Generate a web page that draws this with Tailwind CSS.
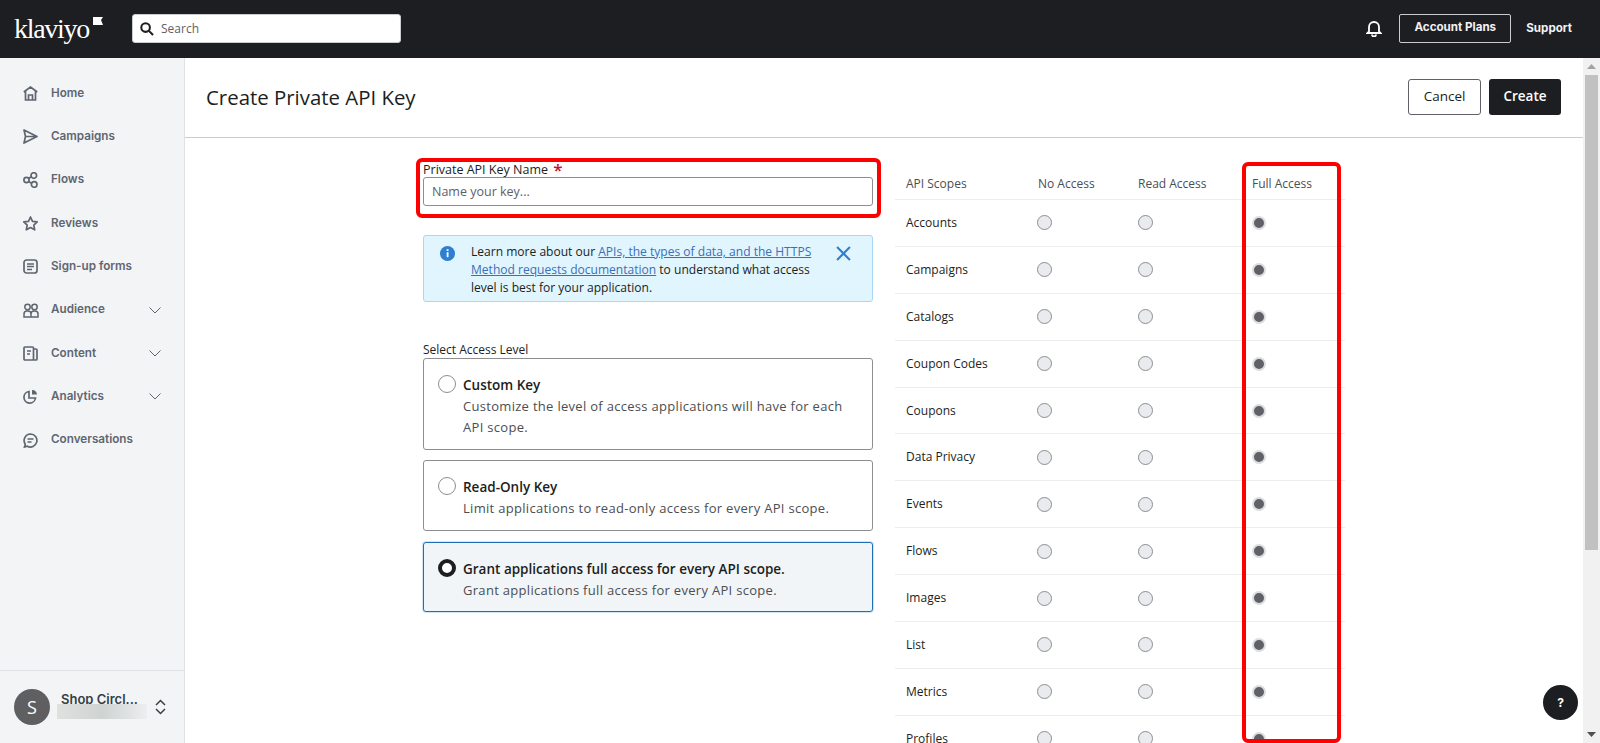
<!DOCTYPE html>
<html lang="en">
<head>
<meta charset="UTF-8">
<meta name="viewport" content="width=device-width, initial-scale=1.0">
<title>Create Private API Key</title>
<script src="https://cdn.jsdelivr.net/npm/@tailwindcss/browser@4"></script>
</head>
<body class="h-[743px] overflow-hidden bg-white font-['Open_Sans',sans-serif] text-[#1c1e21]">

<!-- Top bar -->
<header class="h-[58px] bg-[#1c1e21] flex items-center pl-[14px] pr-[28px]">
  <div class="w-[118px] flex items-start relative">
    <span class="font-['Liberation_Serif',serif] text-[28px] leading-none text-white tracking-[-1.3px]">klaviyo</span>
    <svg class="absolute left-[79px] top-[2px]" width="10" height="8" viewBox="0 0 10 8"><path d="M0 0h10L8 3l2 5H0z" fill="#fff"/></svg>
  </div>
  <div class="w-[269px] h-[29px] mb-[1px] bg-white rounded-[3px] border border-[#c9ccd1] flex items-center pl-[7px] gap-[7px]">
    <svg width="14" height="14" viewBox="0 0 15 15" fill="none" stroke="#1c1e21" stroke-width="2.2"><circle cx="6" cy="6" r="4.6"/><path d="M9.5 9.5l4.5 4.5"/></svg>
    <span class="text-[12px] text-[#5f6166]">Search</span>
  </div>
  <div class="ml-auto flex items-center">
    <svg width="16" height="17" viewBox="0 0 16 17" fill="none" stroke="#fff" stroke-width="1.8" class="mr-[17px] mb-[2px]"><path d="M3 11.5V7a5 5 0 0 1 10 0v4.5l1.5 1.5h-13z"/><path d="M6 14.5a2 2 0 0 0 4 0"/></svg>
    <div class="w-[112px] h-[29px] mb-[1px] border border-[#c9ccd1] rounded-[2px] flex items-center justify-center pb-[2px] font-['Inter',sans-serif] text-[11.6px] font-bold text-[#f1f2f4]">Account Plans</div>
    <span class="ml-[15px] font-['Inter',sans-serif] text-[11.6px] font-bold text-[#f1f2f4]">Support</span>
  </div>
</header>

<div class="flex h-[685px]">
  <!-- Sidebar -->
  <aside class="w-[185px] shrink-0 bg-[#f2f4f6] border-r border-[#dfe1e5] flex flex-col font-['Inter',sans-serif] text-[11.7px] font-semibold text-[#5f6670]">
    <nav class="pt-[14px] flex flex-col">
      <a class="h-[43.3px] flex items-center pl-[23px] gap-[13px]">
        <svg width="15" height="15" viewBox="0 0 15 15" fill="none" stroke="#5f6670" stroke-width="1.7"><path d="M.8 6l6.7-5L14.2 6M2.5 5v9h10V5M5.5 14V9h4v5"/></svg>
        <span>Home</span>
      </a>
      <a class="h-[43.3px] flex items-center pl-[23px] gap-[13px]">
        <svg width="15" height="15" viewBox="0 0 15 15" fill="none" stroke="#5f6670" stroke-width="1.7" stroke-linejoin="round"><path d="M1 1l13 6.5L1 14l1.5-6.5zM2.5 7.5H14"/></svg>
        <span>Campaigns</span>
      </a>
      <a class="h-[43.3px] flex items-center pl-[23px] gap-[13px]">
        <svg width="15" height="16" viewBox="0 0 15 16" fill="none" stroke="#5f6670" stroke-width="1.7"><circle cx="3.5" cy="8" r="2.6"/><circle cx="10.8" cy="3.5" r="2.8"/><circle cx="11.2" cy="12.5" r="2.8"/><path d="M5.5 6.5l2.8-1.7M5.5 9.5l3.2 1.7"/></svg>
        <span>Flows</span>
      </a>
      <a class="h-[43.3px] flex items-center pl-[23px] gap-[13px]">
        <svg width="15" height="15" viewBox="0 0 15 15" fill="none" stroke="#5f6670" stroke-width="1.7" stroke-linejoin="round"><path d="M7.5 1l2 4.3 4.7.6-3.400 3.200.9 4.700-4.200-2.300-4.200 2.300.9-4.700L.8 5.900l4.700-.6z"/></svg>
        <span>Reviews</span>
      </a>
      <a class="h-[43.3px] flex items-center pl-[23px] gap-[13px]">
        <svg width="15" height="15" viewBox="0 0 15 15" fill="none" stroke="#5f6670" stroke-width="1.7"><rect x="1" y="1" width="13" height="13" rx="2.5"/><path d="M4 5h7M4 7.5h7M4 10.5h5"/></svg>
        <span>Sign-up forms</span>
      </a>
      <a class="h-[43.3px] flex items-center pl-[23px] gap-[12px]">
        <svg width="16" height="15" viewBox="0 0 16 15" fill="none" stroke="#5f6670" stroke-width="1.5"><circle cx="4.5" cy="4" r="2.7"/><circle cx="11.5" cy="4" r="2.7"/><path d="M1 14v-3a3 3 0 0 1 3-3h1a3 3 0 0 1 3 3 3 3 0 0 1 3-3h1a3 3 0 0 1 3 3v3zM8 11v3"/></svg>
        <span>Audience</span>
        <svg class="ml-auto mr-[23px]" width="12" height="7" viewBox="0 0 12 7" fill="none" stroke="#5f6670"><path d="M.5.5L6 6l5.5-5.5"/></svg>
      </a>
      <a class="h-[43.3px] flex items-center pl-[23px] gap-[13px]">
        <svg width="15" height="15" viewBox="0 0 15 15" fill="none" stroke="#5f6670" stroke-width="1.7"><rect x="1" y="1" width="9.5" height="13" rx="1"/><path d="M4 5h4M4 8h3M10.5 3H13a1 1 0 0 1 1 1v9a1 1 0 0 1-1 1h-2.500"/></svg>
        <span>Content</span>
        <svg class="ml-auto mr-[23px]" width="12" height="7" viewBox="0 0 12 7" fill="none" stroke="#5f6670"><path d="M.5.5L6 6l5.5-5.5"/></svg>
      </a>
      <a class="h-[43.3px] flex items-center pl-[23px] gap-[13px]">
        <svg width="15" height="15" viewBox="0 0 15 15" fill="none" stroke="#5f6670" stroke-width="1.7"><path d="M6 2.5a5.800 5.800 0 1 0 6.500 6.500H6z"/><path d="M9 1v4.500h5A5 5 0 0 0 9 1z" fill="#5f6670" stroke="none"/></svg>
        <span>Analytics</span>
        <svg class="ml-auto mr-[23px]" width="12" height="7" viewBox="0 0 12 7" fill="none" stroke="#5f6670"><path d="M.5.5L6 6l5.5-5.5"/></svg>
      </a>
      <a class="h-[43.3px] flex items-center pl-[23px] gap-[13px]">
        <svg width="15" height="15" viewBox="0 0 15 15" fill="none" stroke="#5f6670" stroke-width="1.7"><path d="M7.5 1a6.500 6.500 0 1 1-3.200 12.200L1.500 14l.8-2.800A6.500 6.500 0 0 1 7.500 1z"/><path d="M4.500 6h6M4.500 9h4"/></svg>
        <span>Conversations</span>
      </a>
    </nav>
    <div class="mt-auto h-[73px] border-t border-[#dfe1e5] flex items-center pl-[14px] relative">
      <div class="w-[36px] h-[36px] rounded-full bg-[#5f5f62] text-white flex items-center justify-center text-[18px] font-['Open_Sans',sans-serif] font-normal">S</div>
      <span class="ml-[11px] -mt-[14px] text-[13px] font-semibold text-[#373f47]">Shop Circl...</span>
      <div class="absolute left-[57px] top-[33px] w-[90px] h-[15px] bg-linear-to-r from-[#dfe1df] via-[#cfd3d2] to-[#eceeef]"></div>
      <svg class="absolute left-[155px] top-[28px]" width="11" height="16" viewBox="0 0 11 16" fill="none" stroke="#373f47" stroke-width="1.5"><path d="M1 6l4.5-4.500L10 6M1 10l4.500 4.500L10 10"/></svg>
    </div>
  </aside>

  <!-- Main -->
  <main class="flex-1 relative overflow-hidden">
    <div class="h-[80px] mr-[1px] border-b border-[#c9ccd1] flex items-center justify-between pl-[21px] pr-[38px]">
      <h1 class="text-[20.4px] font-normal">Create Private API Key</h1>
      <div class="flex gap-[8px] mb-[2px]">
        <button class="w-[73px] h-[36px] rounded-[3px] border border-[#5f6166] bg-white text-[13.5px]">Cancel</button>
        <button class="w-[72px] h-[36px] rounded-[3px] bg-[#1c1e21] text-white text-[13.5px] font-semibold">Create</button>
      </div>
    </div>

    <div class="flex items-start pl-[238px]">
      <!-- Form column -->
      <div class="w-[450px] text-[#1c1e21]">
        <label class="block h-[18px] mt-[21px] text-[12.5px] leading-[18px]">Private API Key Name <span class="text-[#c8102e] text-[17px] font-semibold leading-none ml-[2px] relative top-[2px]">*</span></label>
        <input class="block w-full h-[29px] px-[8px] border border-[#8c8e91] rounded-[3px] text-[12.5px] placeholder:text-[#5f6166]" placeholder="Name your key...">

        <div class="mt-[29px] h-[67px] bg-[#e1f5fe] border border-[#a9d8f4] rounded-[3px] flex items-start pl-[16px] pt-[7px] relative">
          <svg class="mt-[3px] shrink-0" width="15" height="15" viewBox="0 0 15 15"><circle cx="7.5" cy="7.5" r="7.5" fill="#2f7fd1"/><rect x="6.7" y="3.2" width="1.8" height="1.8" fill="#fff"/><rect x="6.7" y="6.2" width="1.8" height="5" fill="#fff"/></svg>
          <p class="ml-[16px] w-[345px] text-[12.05px] leading-[18px]">Learn more about our <a class="text-[#3b6fb6] underline">APIs, the types of data, and the HTTPS Method requests documentation</a> to understand what access level is best for your application.</p>
          <svg class="absolute left-[412px] top-[10px]" width="15" height="15" viewBox="0 0 14 14" fill="none" stroke="#2f7fd1" stroke-width="2"><path d="M1 1l12 12M13 1L1 13"/></svg>
        </div>

        <p class="mt-[40px] text-[12px] leading-[16px]">Select Access Level</p>
        <div class="h-[92px] border border-[#8c8e91] rounded-[3px] flex items-start pl-[14px] pt-[16px]">
          <span class="w-[18px] h-[18px] rounded-full border border-[#8c8e91] bg-white shrink-0"></span>
          <div class="ml-[7px]">
            <p class="text-[13.5px] font-semibold leading-[20px]">Custom Key</p>
            <p class="mt-[1px] text-[13px] leading-[21px] tracking-[0.3px] text-[#4b4e52]">Customize the level of access applications will have for each<br>API scope.</p>
          </div>
        </div>
        <div class="mt-[10px] h-[71px] border border-[#8c8e91] rounded-[3px] flex items-start pl-[14px] pt-[16px]">
          <span class="w-[18px] h-[18px] rounded-full border border-[#8c8e91] bg-white shrink-0"></span>
          <div class="ml-[7px]">
            <p class="text-[13.5px] font-semibold leading-[20px]">Read-Only Key</p>
            <p class="mt-[1px] text-[13px] leading-[21px] tracking-[0.3px] text-[#4b4e52]">Limit applications to read-only access for every API scope.</p>
          </div>
        </div>
        <div class="mt-[11px] h-[70px] border border-[#1f6fb8] rounded-[3px] bg-[#f2f5f7] shadow-[0_0_0_1px_#cfe6f7] flex items-start pl-[14px] pt-[16px]">
          <span class="w-[18px] h-[18px] rounded-full border-[4px] border-[#1c1e21] bg-white shrink-0"></span>
          <div class="ml-[7px]">
            <p class="text-[13.5px] font-semibold leading-[20px]">Grant applications full access for every API scope.</p>
            <p class="mt-[1px] text-[13px] leading-[21px] tracking-[0.3px] text-[#4b4e52]">Grant applications full access for every API scope.</p>
          </div>
        </div>
      </div>

      <!-- Scopes table -->
      <div class="ml-[22px] w-[450px] mt-[25px] text-[12px]">
        <div class="h-[37px] pt-[5px] grid grid-cols-[131px_101px_114px_1fr] items-center pl-[11px] border-b border-[#ebedef] text-[#4b4e52]">
          <span>API Scopes</span><span class="ml-[1px]">No Access</span><span>Read Access</span><span>Full Access</span>
        </div>
        <div id="scopes"></div>
      </div>
    </div>

    <!-- Screenshot annotations -->
    <div class="absolute left-[231px] top-[100px] w-[465px] h-[60px] border-[4px] border-[#ff0000] rounded-[6px]"></div>
    <div class="absolute left-[1057px] top-[104px] w-[99px] h-[581px] border-[4px] border-[#ff0000] rounded-[6px]"></div>

    <div class="absolute left-[1358px] top-[627px] w-[35px] h-[35px] rounded-full bg-[#1c1e21] text-white flex items-center justify-center text-[12px] font-bold font-['Inter',sans-serif]">?</div>

    <!-- Scrollbar -->
    <div class="absolute right-0 top-0 bottom-0 w-[17px] bg-[#f1f1f1] flex flex-col items-center">
      <svg class="mt-[6px]" width="9" height="5" viewBox="0 0 9 5"><path d="M4.5 0L9 5H0z" fill="#a3a3a3"/></svg>
      <div class="mt-[6px] w-[13px] h-[475px] bg-[#c1c1c1]"></div>
      <svg class="mt-auto mb-[6px]" width="9" height="5" viewBox="0 0 9 5"><path d="M0 0h9L4.5 5z" fill="#505050"/></svg>
    </div>
  </main>
</div>

<script>
  // Scope rows, Full Access selected on each
  const scopes = ["Accounts", "Campaigns", "Catalogs", "Coupon Codes", "Coupons", "Data Privacy", "Events", "Flows", "Images", "List", "Metrics", "Profiles"];
  const emptyRadio = '<span class="block w-[15px] h-[15px] rounded-full border border-[#8c8e91] bg-[#e9ebee]"></span>';
  document.getElementById("scopes").innerHTML = scopes.map(name => `
    <div class="h-[46.9px] grid grid-cols-[131px_101px_114px_1fr] items-center pl-[11px] border-b border-[#ebedef]">
      <span>${name}</span>
      <span>${emptyRadio}</span>
      <span>${emptyRadio}</span>
      <span class="block w-[14px] h-[14px] rounded-full border-[2.5px] border-[#dcdde0] bg-[#5f6166]"></span>
    </div>`).join("");
</script>
</body>
</html>
